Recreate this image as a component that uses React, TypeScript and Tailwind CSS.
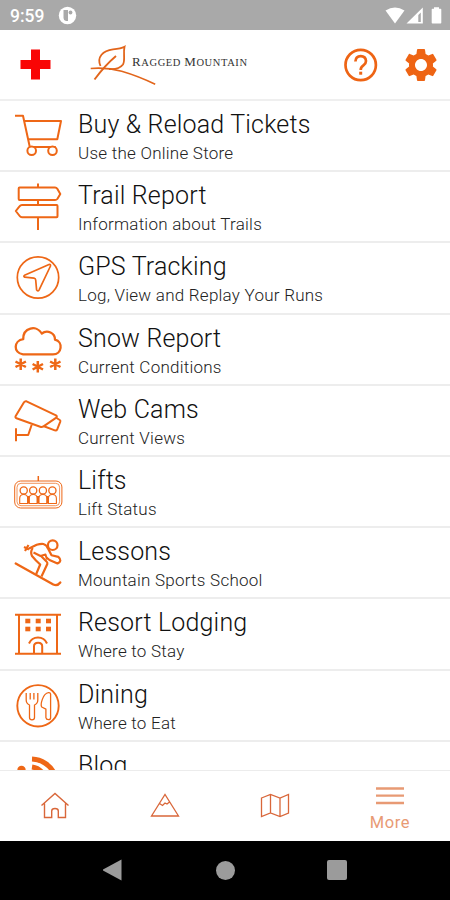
import React from 'react';
import { MdSettings } from 'react-icons/md';

interface MenuItem {
  title: string;
  subtitle?: string;
  icon: React.ReactNode;
}

// Every row icon is drawn on the same 72x71 canvas
const menuItems: MenuItem[] = [
  {
    title: 'Buy & Reload Tickets',
    subtitle: 'Use the Online Store',
    icon: (
      <>
        <path d="M15 14.700h8L29.800 46h26" />
        <path d="M24.500 20H61l-3.700 18.300H28.500" />
        <circle cx="31.700" cy="49.700" r="4.300" fill="#fff" />
        <circle cx="52.500" cy="49.700" r="4.300" fill="#fff" />
      </>
    ),
  },
  {
    title: 'Trail Report',
    subtitle: 'Information about Trails',
    icon: (
      <>
        <path d="M19.500 15.500H55q1.500 0 2.300 1.200L60.300 22l-3 5Q56.500 28 55 28H19.500q-.8 0-.8-1V16.500q0-1 .8-1z" />
        <path d="M56.700 32.900H22q-1.500 0-2.300 1.200L15.800 39l3.900 5q.8 1.200 2.300 1.200h34.700q.8 0 .8-1V33.900q0-1-.8-1z" />
        <path d="M38 11.500v4M38 28v5M38 45v13" />
      </>
    ),
  },
  {
    title: 'GPS Tracking',
    subtitle: 'Log, View and Replay Your Runs',
    icon: (
      <g strokeWidth="1.700">
        <circle cx="38" cy="34.500" r="20.700" />
        <path d="M49 21.500L24.500 32.300q-1.400 1.100.2 1.900l9.300.9q1.600.3 1.700 1.900l.9 9.900q1.200 2 2.400.2L50.500 23q.2-2-1.500-1.500z" />
      </g>
    ),
  },
  {
    title: 'Snow Report',
    subtitle: 'Current Conditions',
    icon: (
      <>
        <path
          strokeWidth="2.300"
          d="M23 39.300h30c9 0 10.500-12.500 2-14.600.2-6.800-7.800-10.500-13.200-6.200C36.500 9.500 23 12.500 23.200 24.200 13.500 25.500 13 38 23 39.300z"
        />
        <path
          strokeWidth="2.500"
          d="M20.700 43.500v11.500M15.500 46.500l10.400 5.500M15.500 52l10.400-5.500M37.800 46v11.500M32.600 49l10.400 5.500M32.600 54.500l10.400-5.500M55.300 43.500v11.500M50.100 46.500l10.400 5.500M50.100 52l10.400-5.500"
        />
      </>
    ),
  },
  {
    title: 'Web Cams',
    subtitle: 'Current Views',
    icon: (
      <>
        <path d="M26.500 15.300L56 29.300q1.500 1 .3 2.300L43.500 40.300q-1.500 1-3.300.4L16.500 32.300q-1.600-.8-.8-2.300L24 16.300q1-1.500 2.500-1z" />
        <path d="M56.500 32l3.300 2q.9.600.5 1.700l-3 7.500q-.8 1.600-2.500 1.200L44 40.300" />
        <path d="M31.700 38.700l-3.500 10.300H16M16 42.200V55.200" />
      </>
    ),
  },
  {
    title: 'Lifts',
    subtitle: 'Lift Status',
    icon: (
      <g strokeWidth="1">
        <path d="M38.300 19v5" strokeWidth="1.500" />
        <rect x="14.700" y="24" width="47.200" height="27" rx="6" />
        <rect x="17" y="26.300" width="42.600" height="22.400" rx="4" opacity="0.700" />
        {[23.7, 33.2, 42.9, 52.4].map((x) => (
          <g key={x}>
            <circle cx={x} cy="33.400" r="3.600" strokeWidth="1.300" />
            <path d={`M${x - 4} 46.500v-5q0-4 4-4t4 4v5z`} strokeWidth="1.100" />
          </g>
        ))}
        <path d="M28.400 39v7.500M38 39v7.500M47.700 39v7.500" strokeWidth="2.400" />
      </g>
    ),
  },
  {
    title: 'Lessons',
    subtitle: 'Mountain Sports School',
    icon: (
      <>
        <circle cx="52.700" cy="17.200" r="4.800" strokeWidth="2.200" />
        <path d="M15.700 35.500L53.300 56.500q4.200 1.800 7-2" strokeWidth="2.300" strokeLinecap="round" />
        <path d="M24 19l5 2.500M28.500 17l-3.500 6M29 20.500l7.700-3.700q3.300-1 6.600-.8 3.200.8 4.700 4.500l3.500 6.800 6.800 1.600q4.500 4-.8 6.600l-8-3.500-3-2.500" strokeWidth="2.200" />
        <path d="M32.700 20q-2.700 4-.7 8l4 4.500 4.200 4-4 9.500M41.500 48.500l5.800-12.500q.4-1.500-.8-2.500l-5.500-5.500" strokeWidth="2.200" />
        <path d="M33.500 24.500l7 3.500 5-1.500 1.500 5" strokeWidth="2" />
      </>
    ),
  },
  {
    title: 'Resort Lodging',
    subtitle: 'Where to Stay',
    icon: (
      <>
        <path d="M15 15.700h46M15 54.700h46M19 15.700v39M57 15.700v39" />
        <path d="M29 44.500c3.500-8 14.500-8 18 0" />
        <path d="M34 54.700v-7.500q0-3.500 4.100-3.500t4.100 3.500v7.500" />
        <g fill="#ee6716" stroke="none">
          {[25.3, 35.7, 46].map((x) => (
            <React.Fragment key={x}>
              <rect x={x} y="19.700" width="5" height="4.600" />
              <rect x={x} y="27.700" width="5" height="4.600" />
            </React.Fragment>
          ))}
        </g>
      </>
    ),
  },
  {
    title: 'Dining',
    subtitle: 'Where to Eat',
    icon: (
      <g strokeWidth="1.300">
        <circle cx="38" cy="34.800" r="20.700" strokeWidth="1.900" />
        <path d="M26.200 22v7q0 3.500 3.300 5V46.500q0 2.300 2.500 2.300t2.500-2.300V34q3.300-1.500 3.300-5V22M30.200 22v6.500M33.900 22v6.500" />
        <path d="M48.500 21.700c-6 1-8.200 12-6.800 14.300l4.200 2.200v8.500q.3 2 2.500 2t2.200-2V23q-.2-1.500-2.100-1.300z" />
      </g>
    ),
  },
  {
    title: 'Blog',
    icon: (
      <>
        <circle cx="21.500" cy="28" r="4.200" fill="#ee6716" stroke="none" />
        <path d="M32 17A26 26 0 0 1 54.500 32M32 25A17 17 0 0 1 44 33" strokeWidth="5" />
      </>
    ),
  },
];

function StatusBar() {
  return (
    <div className="flex h-[30px] shrink-0 items-center bg-[#a9a9a9] pl-[10px] pr-[8px] text-white">
      <span className="w-[48px] pt-[3px] text-[17.500px] font-medium leading-none">9:59</span>
      <svg width="20" height="20" viewBox="0 0 20 20">
        <circle cx="9.500" cy="10.500" r="8.700" fill="#fff" />
        <path d="M5.500 5h4.500v11H8q-2.500-.5-2.500-3z" fill="#a9a9a9" />
        <circle cx="12.500" cy="7.500" r="1.900" fill="#a9a9a9" />
      </svg>
      <svg className="ml-auto" width="58" height="20" viewBox="0 0 58 20" fill="#fff">
        <path d="M1.500 5.500q9.500-6 19 0L11 18.500z" />
        <path fillRule="evenodd" d="M38.800 2.500v16H22.500zM36.800 7.500v9.500h-2.500V10z" />
        <path d="M50 2.300h5v1.500h1.500q.8 0 .8.800V17.700q0 .8-.8.800h-8q-.8 0-.8-.8V4.600q0-.8.800-.8H50z" />
      </svg>
    </div>
  );
}

function Header() {
  return (
    <header className="flex h-[71px] shrink-0 items-center border-b-2 border-[#efefef] bg-white pl-5 pr-[9px]">
      <svg width="31" height="31" viewBox="0 0 31 31">
        <path d="M11 .5h9V11h10.500v9H20v10.500h-9V20H.500v-9H11z" fill="#f90505" />
      </svg>
      <svg className="ml-[39px]" width="68" height="42" viewBox="90 44 68 42" fill="none" stroke="#e2651b">
        <path d="M90.700 68.500c12-1 21 0 31 2.800 12 3.500 22 7.500 33.500 13" strokeWidth="1.600" />
        <path d="M100.500 66c-4-9 2.500-15.500 12.500-16.700 4.500-.3 8.500-.8 11.500-2.500-1.500 6.500 1 13.500-1.500 17.700-3 4-7.500 5-14 4.500" strokeWidth="1.800" />
        <path d="M116 56C109.500 61.500 103 68 94.500 79.500" strokeWidth="1.900" />
      </svg>
      <div className="-ml-[26px] mt-[-5px] whitespace-nowrap font-['Liberation_Serif',serif] text-[13px] leading-none tracking-[0.600px] text-[#333]">
        R<span className="text-[10.500px]">AGGED </span>M<span className="text-[10.500px]">OUNTAIN</span>
      </div>
      <div className="ml-auto flex gap-5 text-[#ee6414]">
        <svg width="40" height="40" viewBox="0 0 40 40" fill="none" stroke="currentColor" strokeWidth="2.700">
          <circle cx="19.700" cy="20" r="15.200" />
          <path d="M14.400 16.500q.3-5.300 5.300-5.300t5.300 4.800q0 2.500-2.600 4.300-2.700 1.800-2.700 4.700" />
          <path d="M19.700 26.700v3" strokeWidth="3" />
        </svg>
        <MdSettings size={40} />
      </div>
    </header>
  );
}

function MenuRow({ title, subtitle, icon }: MenuItem) {
  return (
    <li className="flex h-[71.200px] border-b-2 border-[#ededed]">
      <svg
        className="shrink-0"
        width="72"
        height="71"
        viewBox="0 0 72 71"
        fill="none"
        stroke="#ee6716"
        strokeWidth="2"
        strokeLinejoin="round"
      >
        {icon}
      </svg>
      <div className="pl-1.5 pt-[9px] text-[#111]">
        <p className="text-[25px] font-[350] leading-[29px] tracking-[0.180px]">{title}</p>
        {subtitle && (
          <p className="text-[17px] font-[350] leading-[28px] tracking-[0.240px] text-[#222]">{subtitle}</p>
        )}
      </div>
    </li>
  );
}

function TabBar() {
  return (
    <nav className="flex h-[71px] shrink-0 border-t border-[#ececec] bg-white text-[#d9673a]">
      <button className="flex w-[110px] items-center justify-center">
        <svg width="30" height="28" viewBox="0 0 30 28" fill="none" stroke="currentColor" strokeWidth="1.400">
          <path d="M1.500 13.500L15 1.500l13.500 12M4.500 11.500V25.500h7.200v-6.500q0-2.500 3.300-2.500t3.300 2.500v6.500H25.500V11.500" />
        </svg>
      </button>
      <button className="flex w-[110px] items-center justify-center">
        <svg width="30" height="28" viewBox="0 0 30 28" fill="none" stroke="currentColor" strokeWidth="1.300">
          <path d="M1.500 24L15 2.500l13.500 21.500zM9.500 11.500l3 2 2.500-2.500 2 1 2.500-2" />
        </svg>
      </button>
      <button className="flex w-[110px] items-center justify-center">
        <svg width="30" height="28" viewBox="0 0 30 28" fill="none" stroke="currentColor" strokeWidth="1.300">
          <path d="M1.500 6l9-3.500 9.500 3.500 8.500-3.500v18.500l-8.500 3.500-9.500-3.500-9 3.500zM10.500 2.500v18.500M20 6V24.500" />
        </svg>
      </button>
      <button className="flex flex-1 flex-col items-center pt-[15px] text-[#e89a74]">
        <svg width="30" height="20" viewBox="0 0 30 20" stroke="currentColor" strokeWidth="2.300">
          <path d="M1 2.500h28M1 9.700h28M1 17h28" />
        </svg>
        <span className="mt-[5px] text-[16.500px] leading-[24px] tracking-[0.600px]">More</span>
      </button>
    </nav>
  );
}

function SystemNav() {
  return (
    <div className="flex h-[59.500px] shrink-0 items-center justify-center gap-[92px] bg-black">
      <svg width="21" height="22" viewBox="0 0 21 22" fill="#9b9b9b">
        <path d="M-1 11L18.500.5v21z" />
      </svg>
      <div className="size-[19px] rounded-full bg-[#9b9b9b]" />
      <div className="size-[20px] rounded-[2px] bg-[#9b9b9b]" />
    </div>
  );
}

export default function App() {
  return (
    <div className="flex h-[900px] w-[450px] flex-col overflow-hidden bg-white font-[Roboto,sans-serif]">
      <StatusBar />
      <Header />
      <ul className="min-h-0 flex-1 overflow-hidden">
        {menuItems.map((item) => (
          <MenuRow key={item.title} {...item} />
        ))}
      </ul>
      <TabBar />
      <SystemNav />
    </div>
  );
}
